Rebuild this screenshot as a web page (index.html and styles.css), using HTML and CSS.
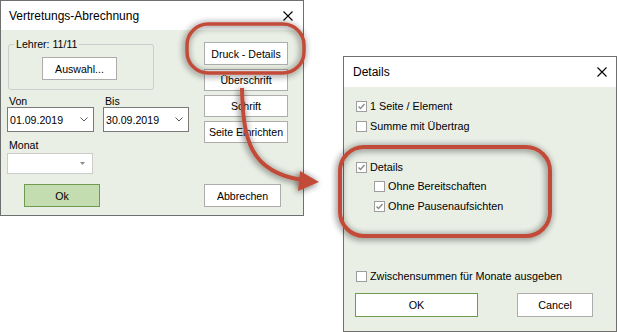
FILE: index.html
```html
<!DOCTYPE html>
<html lang="de">
<head>
<meta charset="utf-8">
<title>Vertretungs-Abrechnung</title>
<link rel="stylesheet" href="styles.css">
</head>
<body>
<div class="desk">
  <div class="dlg dlg1">
    <div class="titlebar">
      <span class="title">Vertretungs-Abrechnung</span>
      <svg class="close" viewBox="0 0 10 10"><path d="M0.5 0.5 L9.5 9.5 M9.5 0.5 L0.5 9.5" stroke="#000" stroke-width="1.1" fill="none"/></svg>
    </div>
    <div class="body body1">
      <div class="cols">
        <div class="left">
          <fieldset class="grp">
            <legend>Lehrer: 11/11</legend>
            <button class="btn auswahl">Auswahl...</button>
          </fieldset>
          <div class="dates">
            <div class="field">
              <div class="lbl">Von</div>
              <div class="combo date von"><span>01.09.2019</span><svg class="chev" viewBox="0 0 8 5"><path d="M0.5 0.5 L4 4 L7.5 0.5" stroke="#555" fill="none"/></svg></div>
            </div>
            <div class="field">
              <div class="lbl">Bis</div>
              <div class="combo date bis"><span>30.09.2019</span><svg class="chev" viewBox="0 0 8 5"><path d="M0.5 0.5 L4 4 L7.5 0.5" stroke="#555" fill="none"/></svg></div>
            </div>
          </div>
          <div class="lbl monat">Monat</div>
          <div class="combo dis"><span></span><svg class="tri" viewBox="0 0 5 3"><path d="M0 0 L5 0 L2.5 3 Z" fill="#8c8c8c"/></svg></div>
        </div>
        <div class="right">
          <button class="btn rbtn first">Druck - Details</button>
          <button class="btn rbtn">Überschrift</button>
          <button class="btn rbtn">Schrift</button>
          <button class="btn rbtn">Seite Einrichten</button>
        </div>
      </div>
      <div class="foot">
        <button class="btn ok1">Ok</button>
        <button class="btn abbr">Abbrechen</button>
      </div>
    </div>
  </div>

  <div class="dlg dlg2">
    <div class="titlebar">
      <span class="title">Details</span>
      <svg class="close" viewBox="0 0 10 10"><path d="M0.5 0.5 L9.5 9.5 M9.5 0.5 L0.5 9.5" stroke="#000" stroke-width="1.1" fill="none"/></svg>
    </div>
    <div class="body body2">
      <div class="row"><span class="cb"><svg viewBox="0 0 9 9"><path d="M1.5 4.5 L3.5 6.5 L7.5 2" stroke="#8a8a8a" stroke-width="1.4" fill="none"/></svg></span><span>1 Seite / Element</span></div>
      <div class="row"><span class="cb"></span><span>Summe mit Übertrag</span></div>
      <div class="row details"><span class="cb"><svg viewBox="0 0 9 9"><path d="M1.5 4.5 L3.5 6.5 L7.5 2" stroke="#8a8a8a" stroke-width="1.4" fill="none"/></svg></span><span>Details</span></div>
      <div class="subs">
        <div class="row sub"><span class="cb"></span><span>Ohne Bereitschaften</span></div>
        <div class="row sub"><span class="cb"><svg viewBox="0 0 9 9"><path d="M1.5 4.5 L3.5 6.5 L7.5 2" stroke="#8a8a8a" stroke-width="1.4" fill="none"/></svg></span><span>Ohne Pausenaufsichten</span></div>
      </div>
      <div class="row zw"><span class="cb"></span><span>Zwischensummen für Monate ausgeben</span></div>
      <div class="foot2">
        <button class="btn okb">OK</button>
        <button class="btn cancel">Cancel</button>
      </div>
    </div>
  </div>

  <svg class="annot" viewBox="0 0 617 332" width="617" height="332">
    <defs>
      <filter id="sh" x="-30%" y="-30%" width="160%" height="160%">
        <feGaussianBlur in="SourceAlpha" stdDeviation="3.5" result="b"/>
        <feOffset in="b" dx="-1" dy="1" result="o"/>
        <feComponentTransfer in="o" result="s"><feFuncA type="linear" slope="0.65"/></feComponentTransfer>
        <feMerge><feMergeNode in="s"/><feMergeNode in="SourceGraphic"/></feMerge>
      </filter>
    </defs>
    <g filter="url(#sh)" stroke="#c14b37" fill="none" stroke-width="3.5">
      <rect x="187" y="24" width="117" height="49" rx="21"/>
      <rect x="340" y="147" width="210" height="89" rx="24" stroke-width="4"/>
      <path d="M242 88 C243 140 250 172 302 180" stroke-width="4"/>
      <polygon points="300,171 319,182 298,191" fill="#c14b37" stroke="none"/>
    </g>
  </svg>
</div>
</body>
</html>
```

FILE: styles.css
```css
* { box-sizing: border-box; }
body { margin: 0; background: #fff; font-family: "Liberation Sans", Arial, sans-serif; color: #000; }
.desk { position: relative; width: 617px; height: 332px; overflow: hidden; background: #fff; }

.dlg { position: absolute; border: 1px solid #6f6f6f; display: flex; flex-direction: column; background: #fff; }
.dlg1 { left: 0; top: 0; width: 304px; height: 216px; font-size: 10.6px; }
.dlg2 { left: 343px; top: 56px; width: 274px; height: 276px; font-size: 10.8px; }

.titlebar { display: flex; align-items: center; justify-content: space-between; background: #fff; flex: none; }
.dlg1 .titlebar { height: 29px; padding: 0 10px 0 8px; }
.dlg2 .titlebar { height: 30px; padding: 0 9px 0 9px; }
.title { font-size: 12px; line-height: 14px; }
.close { width: 10px; height: 10px; display: block; }

.body { flex: 1; background: #e9efe5; display: flex; flex-direction: column; }

.btn { appearance: none; -webkit-appearance: none; margin: 0; padding: 0; font: inherit; color: #000; background: #fff; border: 1px solid #adadad; height: 22px; display: flex; align-items: center; justify-content: center; line-height: 12px; white-space: nowrap; }

/* dialog 1 */
.body1 { padding-left: 6px; }
.cols { display: flex; }
.left { width: 182px; display: flex; flex-direction: column; }
.grp { margin: 8px 0 0 1px; width: 146px; height: 52px; border: 1px solid #cdcdcd; border-radius: 3px; padding: 0; min-inline-size: 0; }
.grp legend { margin-left: 5px; padding: 0 2px; line-height: 12px; font-size: 10.6px; }
.auswahl { width: 75px; height: 23px; margin: 7px 0 0 33px; }
.dates { display: flex; gap: 9px; margin-top: 5px; }
.field { display: flex; flex-direction: column; }
.lbl { line-height: 12px; padding-left: 2px; }
.combo { display: flex; align-items: center; justify-content: space-between; border: 1px solid #7a7a7a; background: #fff; padding: 0 5px 0 2px; }
.combo.date { height: 25px; }
.von { width: 87px; }
.bis { width: 86px; }
.chev { width: 8px; height: 5px; display: block; }
.monat { margin-top: 7px; }
.combo.dis { width: 86px; height: 21px; margin-top: 2px; border-color: #cccccc; padding-right: 7px; }
.tri { width: 5px; height: 3px; display: block; }

.right { margin-left: 15px; display: flex; flex-direction: column; gap: 4px; padding-top: 12px; }
.rbtn { width: 84px; }
.rbtn.first { height: 23px; }

.foot { display: flex; margin-top: 10px; padding-left: 17px; }
.ok1 { width: 76px; height: 23px; background: #c4ddb0; border-color: #6f9b4f; }
.abbr { width: 77px; height: 23px; margin-left: 104px; }

/* dialog 2 */
.body2 { padding: 9px 0 0 12px; }
.row { display: flex; align-items: center; height: 20px; gap: 3px; white-space: nowrap; }
.cb { width: 11px; height: 11px; border: 1px solid #9e9e9e; background: #fff; flex: none; display: flex; align-items: center; justify-content: center; }
.cb svg { width: 9px; height: 9px; display: block; }
.details { margin-top: 21px; }
.subs { margin-top: -1px; }
.sub { padding-left: 18px; }
.zw { margin-top: 50px; }
.foot2 { display: flex; margin-top: 7px; margin-left: -1px; }
.okb { width: 123px; height: 24px; border-color: #6f9b4f; }
.cancel { width: 76px; height: 24px; margin-left: 39px; }

.annot { position: absolute; left: 0; top: 0; pointer-events: none; }
```
